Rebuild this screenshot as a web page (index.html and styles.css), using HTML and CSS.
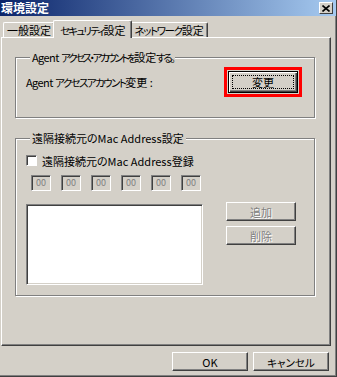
FILE: index.html
```html
<!DOCTYPE html>
<html lang="ja">

<head>
    <meta charset="UTF-8">
    <meta name="viewport" content="width=device-width, initial-scale=1.0">
    <title>環境設定</title>
    <link rel="stylesheet" href="styles.css">
</head>

<body>
    <div class="window">
        <div class="titlebar">
            <span class="title">環境設定</span>
            <span class="close">
                <svg width="8" height="7" viewBox="0 0 8 7"><path d="M0.5 0.5 L7.5 6.5 M7.5 0.5 L0.5 6.5" stroke="#000" stroke-width="1.6" fill="none"/></svg>
            </span>
        </div>

        <div class="tabs">
            <div class="tab">一般設定</div>
            <div class="tab active"><span class="kana kana-tab2">セキュリティ</span>設定</div>
            <div class="tab tab-last"><span class="kana kana-tab3">ネットワーク</span>設定</div>
        </div>

        <div class="panel">
            <fieldset class="group group-agent">
                <legend><span class="latin">Agent</span> <span class="kana kana-legend">アクセス・アカウントを</span>設定<span class="kana kana-legend">する。</span></legend>
                <div class="agent-row">
                    <span><span class="latin">Agent</span> <span class="kana kana-label">アクセスアカウント</span>変更 :</span>
                    <span class="highlight">
                        <button type="button" class="btn btn-default"><span class="focus">変更</span></button>
                    </span>
                </div>
            </fieldset>

            <fieldset class="group group-mac">
                <legend>遠隔接続元のMac Address設定</legend>
                <label class="check"><span class="box"></span>遠隔接続元のMac Address登録</label>
                <div class="octets">
                    <span class="octet">00</span>
                    <span class="octet">00</span>
                    <span class="octet">00</span>
                    <span class="octet">00</span>
                    <span class="octet">00</span>
                    <span class="octet">00</span>
                </div>
                <div class="list-row">
                    <div class="listbox"></div>
                    <div class="side-buttons">
                        <button type="button" class="btn btn-side" disabled>追加</button>
                        <button type="button" class="btn btn-side" disabled>削除</button>
                    </div>
                </div>
            </fieldset>
        </div>

        <div class="footer">
            <button type="button" class="btn btn-footer">OK</button>
            <button type="button" class="btn btn-footer"><span class="kana">キャンセル</span></button>
        </div>
    </div>
</body>

</html>
```

FILE: styles.css
```css
* {
    box-sizing: border-box;
}

body {
    margin: 0;
    font-family: "Noto Sans CJK JP", sans-serif;
    font-size: 11px;
    font-feature-settings: "palt";
    color: #000;
    background: #d4d0c8;
}

/* MS UI Gothic kana are narrower than the kanji */
.kana {
    font-size: 10.5px;
}

.latin {
    letter-spacing: -0.6px;
}

.kana-tab2 {
    letter-spacing: -1.8px;
}

.kana-tab3 {
    letter-spacing: -1.4px;
}

.kana-legend {
    letter-spacing: -2.4px;
}

.kana-label {
    letter-spacing: -1.6px;
}

.window {
    width: 337px;
    height: 377px;
    display: flex;
    flex-direction: column;
    background: #d4d0c8;
    border-right: 1px solid #404040;
    border-bottom: 1px solid #404040;
    box-shadow: inset -1px -1px #808080;
    overflow: hidden;
}

.titlebar {
    height: 16px;
    flex: none;
    display: flex;
    align-items: center;
    justify-content: space-between;
    padding-right: 3px;
    background: linear-gradient(to right, #0a246a, #a6caf0);
}

.title {
    margin-left: 1px;
    color: #fff;
    font-weight: bold;
    font-size: 12px;
    line-height: 16px;
}

.close {
    width: 14px;
    height: 12px;
    display: flex;
    align-items: center;
    justify-content: center;
    background: #d4d0c8;
    border: 1px solid;
    border-color: #fff #404040 #404040 #fff;
}

.tabs {
    height: 21px;
    flex: none;
    display: flex;
    align-items: flex-end;
    padding-left: 3px;
}

.tab {
    height: 15px;
    padding: 0 3px;
    line-height: 14px;
    border: 1px solid;
    border-bottom: none;
    border-color: #fff #404040 #404040 #fff;
    border-radius: 2px 2px 0 0;
    box-shadow: inset -1px 0 #808080;
    white-space: nowrap;
}

.tab-last {
    padding: 0 3px 0 4px;
}

.tab.active {
    height: 18px;
    margin: 0 -2px -1px;
    padding: 2px 5px 0 6px;
    position: relative;
    z-index: 1;
    background: #d4d0c8;
}

.panel {
    height: 309px;
    flex: none;
    margin: 0 5px 0 1px;
    padding: 12px 15px 0 13px;
    border: 1px solid;
    border-color: #fff #404040 #404040 #fff;
    box-shadow: inset -1px -1px #808080;
}

.group {
    margin: 0;
    padding: 0 12px 0 10px;
    border: 1px solid #808080;
    box-shadow: inset 1px 1px #fff, 1px 1px #fff;
}

.group legend {
    margin-left: 4px;
    padding: 0 2px;
    line-height: 15px;
    background: #d4d0c8;
}

.group-agent {
    padding-top: 2px;
    padding-bottom: 20px;
}

.agent-row {
    display: flex;
    align-items: center;
    justify-content: space-between;
}

.highlight {
    display: flex;
    padding: 1px;
    border: 3px solid #ff0000;
}

.btn {
    padding: 0;
    font: inherit;
    color: #000;
    background: #d4d0c8;
    border: 1px solid;
    border-color: #fff #404040 #404040 #fff;
    box-shadow: inset -1px -1px #808080;
}

.btn:disabled {
    color: #808080;
    text-shadow: 1px 1px #fff;
}

.btn-default {
    width: 70px;
    height: 22px;
    display: flex;
    padding: 3px;
    border-color: #000;
    box-shadow: inset 1px 1px #fff, inset -1px -1px #404040, inset -2px -2px #808080;
}

.focus {
    flex: 1;
    display: flex;
    align-items: center;
    justify-content: center;
    border: 1px dotted #000;
}

.group-mac {
    margin-top: 13px;
    padding-bottom: 10px;
}

.check {
    display: flex;
    align-items: center;
    gap: 5px;
    margin-top: 8px;
    height: 13px;
}

.box {
    width: 11px;
    height: 11px;
    background: #fff;
    border: 1px solid;
    border-color: #808080 #fff #fff #808080;
    box-shadow: inset 1px 1px #404040;
}

.octets {
    display: flex;
    gap: 10px;
    margin: 8px 0 0 5px;
}

.octet {
    width: 20px;
    height: 16px;
    padding-left: 4px;
    font-size: 9px;
    line-height: 14px;
    color: #808080;
    border: 1px solid;
    border-color: #808080 #fff #fff #808080;
    box-shadow: inset 1px 1px #404040;
}

.list-row {
    display: flex;
    align-items: flex-start;
    gap: 23px;
    margin-top: 13px;
}

.listbox {
    width: 177px;
    height: 81px;
    background: #fff;
    border: 1px solid;
    border-color: #808080 #fff #fff #808080;
    box-shadow: inset 1px 1px #404040, inset -1px -1px #d4d0c8;
}

.side-buttons {
    display: flex;
    flex-direction: column;
    gap: 5px;
    margin-top: -2px;
}

.btn-side {
    width: 70px;
    height: 19px;
}

.footer {
    display: flex;
    justify-content: flex-end;
    gap: 5px;
    padding: 6px 7px 0 0;
}

.btn-footer {
    width: 76px;
    height: 19px;
}
```
